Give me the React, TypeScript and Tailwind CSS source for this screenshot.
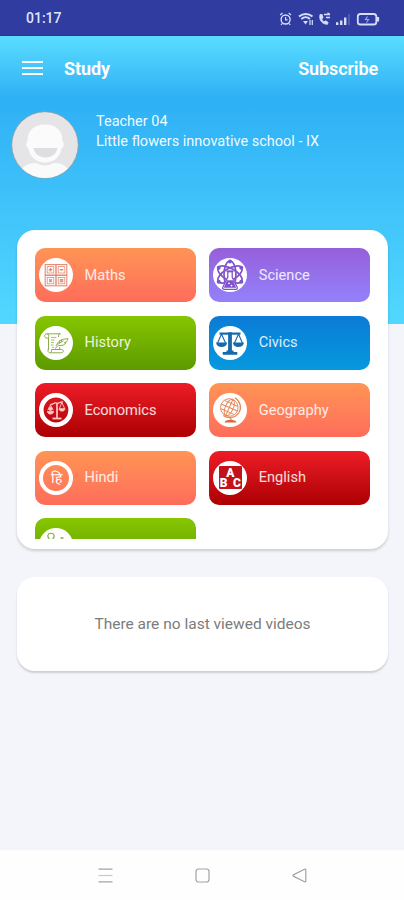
import type { ReactNode } from 'react';

const MathsIcon = () => (
    <svg viewBox="0 0 34 34" className="w-[34px] h-[34px]" fill="none" stroke="#e38a74" strokeWidth="1.1">
        <circle cx="17" cy="17" r="17" fill="#fff" stroke="none" />
        <rect x="6.2" y="6.6" width="21.6" height="21.2" />
        <path d="M17 6.6v21.200M6.200 17.200h21.600" strokeWidth="1.400" />
        <g strokeWidth="0.8">
            <rect x="8.2" y="8.6" width="6.6" height="6.4" />
            <rect x="19.2" y="8.6" width="6.6" height="6.4" />
            <rect x="8.2" y="19.4" width="6.6" height="6.4" />
            <rect x="19.2" y="19.4" width="6.6" height="6.4" />
        </g>
        <path d="M9.700 11.800h3.600M11.500 10v3.600M20.700 11.800h3.600M10.200 21.300l2.600 2.600M12.800 21.300l-2.600 2.600M20.700 21.700h3.600M20.700 23.500h3.600" strokeWidth="1.400" />
    </svg>
);

const ScienceIcon = () => (
    <svg viewBox="0 0 34 34" className="w-[34px] h-[34px]" fill="none" stroke="#8052cc" strokeWidth="1.7">
        <circle cx="17" cy="17" r="17" fill="#fff" stroke="none" />
        <ellipse cx="17" cy="16.500" rx="6" ry="13.500" />
        <ellipse cx="17" cy="16.500" rx="6" ry="13.500" transform="rotate(60 17 16.500)" />
        <ellipse cx="17" cy="16.500" rx="6" ry="13.500" transform="rotate(-60 17 16.500)" />
        <path d="M14.800 13.500h4.400V19l5 10.200a1.500 1.500 0 0 1-1.400 2.200H11.200a1.500 1.500 0 0 1-1.400-2.200l5-10.200z" fill="#fff" strokeWidth="1.300" />
        <path d="M14 22.200h6l3.200 7.600H10.800z" fill="#8052cc" stroke="none" />
        <path d="M13.500 13.300h7" strokeWidth="1.700" />
        <circle cx="16" cy="25.300" r="0.900" fill="#fff" stroke="none" />
        <circle cx="18.500" cy="27.600" r="0.900" fill="#fff" stroke="none" />
        <g fill="#8052cc" stroke="none">
            <circle cx="17" cy="3.600" r="2" />
            <circle cx="5.700" cy="9.800" r="2" />
            <circle cx="28.300" cy="9.800" r="2" />
            <circle cx="5.700" cy="23.700" r="2" />
            <circle cx="28.300" cy="23.700" r="2" />
        </g>
    </svg>
);

const HistoryIcon = () => (
    <svg viewBox="0 0 34 34" className="w-[34px] h-[34px]" fill="none" stroke="#8bad48" strokeWidth="1">
        <circle cx="17" cy="17" r="17" fill="#fff" stroke="none" />
        <path d="M8 7.800h13.500c-2 0-2 1.400-2 3.200M8 7.800c-3.200 0-3.200 4.300 0 4.300h1.500V24M8 7.800c2 0 1.800 2 1.600 4.300M9.600 22.500c-1.500 3 0 4.300 1.700 4.300h11.400c2.200 0 2.200-3.300 0-3.300H12.500c.3 2-.4 3.300-1.400 3.300M20.700 21v2.300" />
        <path d="M17 20c1.500-4.300 5.300-7.200 12-7.300-.4 2.200-1.700 3.500-3.700 4 .7.1 1.300 0 1.700-.1-1.200 2.500-4.200 3.400-7.500 2.800L16 22.500M18.500 18.500l6-3.800M20.500 17v-2.500M22.400 15.800v-2.300" />
        <path d="M12 11.400h5.400M12 14h3.600M12 16.600h3M12 19h2.500M13 21.300h2" strokeWidth="0.8" />
    </svg>
);

const CivicsIcon = () => (
    <svg viewBox="0 0 34 34" className="w-[34px] h-[34px]" fill="none" stroke="#1569ac" strokeWidth="1.3">
        <circle cx="17" cy="17" r="17" fill="#fff" stroke="none" />
        <path d="M6.500 7.600h21" strokeWidth="2.200" />
        <path d="M17 6.300v19" strokeWidth="3.800" />
        <path d="M13.500 24.500h7v1.500h3.800v2.700H9.700V26h3.800z" fill="#1569ac" stroke="none" />
        <path d="M8.500 8L4.600 17M8.500 8l4 9M25.500 8l-4 9M25.500 8l3.900 9" strokeWidth="1.100" />
        <path d="M3 16.500h11.200c-.4 3.200-2.700 4.500-5.600 4.500S3.400 19.700 3 16.500zM19.800 16.500H31c-.4 3.200-2.700 4.500-5.600 4.500s-5.200-1.300-5.600-4.500z" fill="#1569ac" stroke="none" />
    </svg>
);

const EconomicsIcon = () => (
    <svg viewBox="0 0 34 34" className="w-[34px] h-[34px]" fill="none" stroke="#ffc9c9" strokeWidth="0.9">
        <circle cx="17" cy="17" r="14.700" stroke="#fff" strokeWidth="4.600" />
        <path d="M18 10v15" strokeWidth="1.700" />
        <path d="M13.500 25.500h9" strokeWidth="1.800" />
        <path d="M11 12.200l5-2.300c1.300-.5 2 .8 3.200.3l4.800-1.500" strokeWidth="1.300" />
        <path d="M11.500 12.200l-2.700 5M11.500 12.200l2.700 5M22.900 9.500l-2.500 6M22.900 9.500l2.700 6" />
        <path d="M8.400 18.400h6.200c-.3 2-1.500 2.600-3.100 2.600s-2.800-.6-3.100-2.600zM20 15.700h6c-.3 1.800-1.400 2.300-3 2.300s-2.700-.5-3-2.300z" fill="#ffc9c9" />
        <circle cx="11.500" cy="15.700" r="1.700" fill="#ffc9c9" />
    </svg>
);

const GeographyIcon = () => (
    <svg viewBox="0 0 34 34" className="w-[34px] h-[34px]" fill="none" stroke="#e58a5c" strokeWidth="1">
        <circle cx="17" cy="17" r="17" fill="#fff" stroke="none" />
        <circle cx="16.300" cy="14.500" r="8.800" />
        <g transform="rotate(24 16.300 14.500)">
            <ellipse cx="16.300" cy="14.500" rx="4" ry="8.800" />
            <path d="M16.300 5.700v17.600M7.500 14.500h17.600M9.400 10h13.800M9.400 19h13.800" />
        </g>
        <path d="M22 4.700c5.500 3.600 7 10.300 3.700 15.300-3.500 5-10.200 6-15.500 2.500M17.800 24v3" strokeWidth="1.300" />
        <path d="M11.500 29.500c.5-1.700 2.600-2.700 6-2.700s5.500 1 6 2.700z" fill="#d66a43" stroke="none" />
    </svg>
);

const HindiIcon = () => (
    <span className="w-[34px] h-[34px] rounded-full border-[4.5px] border-white flex items-center justify-center text-white text-[14px] leading-none font-medium">
        हि
    </span>
);

const EnglishIcon = () => (
    <span className="w-[34px] h-[34px] rounded-full bg-white flex items-center justify-center">
        <span className="w-[23px] h-[23px] rounded-[1px] bg-[#c4121b] text-white text-[12px] leading-[10px] font-black flex flex-col items-center justify-center">
            <span>A</span>
            <span className="w-full flex justify-between px-px">
                <span>B</span>
                <span>C</span>
            </span>
        </span>
    </span>
);

const LastIcon = () => (
    <svg viewBox="0 0 34 34" className="w-[34px] h-[34px]" fill="none" stroke="#7fa536" strokeWidth="1.1">
        <circle cx="17" cy="17" r="17" fill="#fff" stroke="none" />
        <path d="M10 10.500c-2-2-1.400-5.200 2-5.200s4 3.200 2 5.200v2h-4z" />
        <path d="M21.500 10h3" strokeWidth="1.400" />
    </svg>
);

const orange = 'bg-linear-to-b from-[#ff9455] to-[#fe6c5b]';
const purple = 'bg-linear-to-b from-[#965fdc] to-[#9381fb]';
const green = 'bg-linear-to-b from-[#87c600] to-[#5c9a00]';
const blue = 'bg-linear-to-b from-[#0c7bd6] to-[#0699df]';
const red = 'bg-linear-to-b from-[#ee1c25] to-[#ac0003]';

const subjects: { name: string; color: string; icon: ReactNode }[] = [
    { name: 'Maths', color: orange, icon: <MathsIcon /> },
    { name: 'Science', color: purple, icon: <ScienceIcon /> },
    { name: 'History', color: green, icon: <HistoryIcon /> },
    { name: 'Civics', color: blue, icon: <CivicsIcon /> },
    { name: 'Economics', color: red, icon: <EconomicsIcon /> },
    { name: 'Geography', color: orange, icon: <GeographyIcon /> },
    { name: 'Hindi', color: orange, icon: <HindiIcon /> },
    { name: 'English', color: red, icon: <EnglishIcon /> },
    { name: '', color: green, icon: <LastIcon /> },
];

function StatusBar() {
    return (
        <div className="h-9 shrink-0 bg-[#303c9f] border-b border-[#28349a] flex items-center justify-between pl-[26px] pr-6 pt-[2px] text-[#dfe6ff]">
            <span className="text-[14px] font-medium">01:17</span>
            <svg viewBox="0 0 102 16" className="w-[102px] h-4" fill="none" stroke="#d5ddfb" strokeWidth="1.4">
                {/* Alarm */}
                <circle cx="7.600" cy="8.500" r="4.500" />
                <path d="M7.600 6v2.800h2M2.200 4l2.300-2M13 4l-2.300-2M4.300 12.300L3 14M10.900 12.300l1.300 1.700" strokeWidth="1.200" />
                {/* Wifi */}
                <path d="M21 5.500c4-3.500 9.500-3.500 13.500 0M23.300 8c2.600-2.300 6.200-2.300 8.700 0" strokeWidth="2" />
                <path d="M25 10h5l-2.500 3.500z" fill="#d5ddfb" stroke="none" />
                <path d="M32 14V9M34.300 9v5" strokeWidth="1.200" />
                {/* Call */}
                <path d="M42 3.500c-1.500 5.500 2.500 10 7.500 9.800l.6-2-2.600-1.500-1.400 1c-1.300-.7-2-1.700-2.300-3l1.300-1-.9-3.300z" fill="#d5ddfb" strokeWidth="0.800" />
                <path d="M46 3.500h6M49.500 1.800l2.500 1.700M48 6.500h4" strokeWidth="1.300" />
                {/* Signal */}
                <path d="M59.200 14v-2.800M63.200 14V9.500M67.200 14V6.500" strokeWidth="2.400" />
                <path d="M71 14V3" stroke="#5f6dc2" strokeWidth="1.300" />
                {/* Battery */}
                <rect x="79.800" y="3" width="18.500" height="10.500" rx="2.600" strokeWidth="1.800" />
                <path d="M100 6v4.500" strokeWidth="2.200" />
                <path d="M89.500 5.500l-2 3h3l-2 3" stroke="#9aa6e6" strokeWidth="1.200" />
            </svg>
        </div>
    );
}

function Header() {
    return (
        <header className="h-[62px] shrink-0 bg-linear-to-b from-[#5addff] to-[#2eb0f5] flex items-center pl-[22px] pr-[26px] pt-[3px] text-white">
            <div className="w-[21px] -mt-px flex flex-col gap-1">
                <span className="h-[2px] bg-white" />
                <span className="h-[2px] bg-white" />
                <span className="h-[2px] bg-white" />
            </div>
            <h1 className="ml-[21px] text-[18px] font-bold tracking-[-0.1px]">Study</h1>
            <span className="ml-auto text-[18px] font-semibold tracking-[-0.1px]">Subscribe</span>
        </header>
    );
}

function Avatar() {
    return (
        <svg viewBox="0 0 68 68" className="w-[68px] h-[68px] shrink-0">
            <clipPath id="avatar">
                <circle cx="34" cy="34" r="33" />
            </clipPath>
            <circle cx="34" cy="34" r="33.300" fill="#e5e5e7" stroke="#8e9aa0" strokeWidth="0.800" />
            <g clipPath="url(#avatar)">
                <path d="M8 68c0-10 7-16 16-16 3 0 5 2.500 10 2.500S41 52 44 52c9 0 16 6 16 16z" fill="#fafafa" />
                <path d="M16.500 30c0-11 7-16.500 17.500-16.500S51.500 19 51.500 30c2 1.500 1.500 6.500-.8 7.300C49 46.500 42.500 51.500 34 51.500S19 46.500 17.300 37.300c-2.300-.8-2.800-5.800-.8-7.300z" fill="#fbfbfb" />
                <path d="M22.500 37h24c-1.200 6-5.500 9.500-12 9.500S23.700 43 22.500 37z" fill="#dedee0" />
            </g>
        </svg>
    );
}

export default function App() {
    return (
        <div className="w-full h-[900px] bg-[#f4f5fa] flex flex-col overflow-hidden font-[Roboto,sans-serif]">
            <StatusBar />
            <Header />

            {/* Profile */}
            <section className="h-[226px] shrink-0 bg-linear-to-b from-[#2eb0f5] to-[#52d8ff] flex items-start pl-[11px] pt-[13px]">
                <Avatar />
                <div className="ml-[17px] pt-px text-[14.5px] leading-5 text-white/95">
                    <p>Teacher 04</p>
                    <p>Little flowers innovative school - IX</p>
                </div>
            </section>

            {/* Subjects */}
            <section className="ml-[17px] mr-4 -mt-[94px] h-[319px] shrink-0 bg-white rounded-[18px] shadow-[0_2px_3px_rgba(0,0,0,0.16)] pl-[18px] pr-[18px] pt-[18px]">
                <div className="h-[291px] overflow-hidden grid grid-cols-2 auto-rows-[54px] gap-x-[13.5px] gap-y-[13.5px]">
                    {subjects.map((subject) => (
                        <div key={subject.name} className={`flex items-center pl-1 rounded-[10px] ${subject.color}`}>
                            {subject.icon}
                            <span className="ml-[11.5px] pt-px text-[14.6px] text-white/85">{subject.name}</span>
                        </div>
                    ))}
                </div>
            </section>

            {/* Last viewed */}
            <section className="ml-[17px] mr-4 mt-7 h-[94px] shrink-0 bg-white rounded-[18px] shadow-[0_2px_2px_rgba(0,0,0,0.16)] flex items-center justify-center">
                <p className="pt-[2px] text-[15.5px] text-[#7c7c7c]">There are no last viewed videos</p>
            </section>

            {/* System navigation */}
            <nav className="mt-auto h-[50px] shrink-0 bg-[#fefefe] flex items-center justify-center gap-[82px] text-[#a3a3a3]">
                <svg viewBox="0 0 15 15" className="w-[15px] h-[15px]" stroke="currentColor" strokeWidth="1.200">
                    <path d="M.5 1.200h14M.5 13.800h14" />
                    <path d="M.5 7.500h14" stroke="#c8c8c8" />
                </svg>
                <svg viewBox="0 0 15 15" className="w-[15px] h-[15px]" fill="none" stroke="currentColor" strokeWidth="1.200">
                    <rect x="1" y="1" width="13" height="13" rx="2.500" />
                </svg>
                <svg viewBox="0 0 15 15" className="w-[15px] h-[15px]" fill="none" stroke="currentColor" strokeWidth="1.200" strokeLinejoin="round">
                    <path d="M1.300 6.900L12.500 1.200q1.300-.5 1.300.8v11q0 1.300-1.300.8L1.300 8.100q-.9-.6 0-1.200z" />
                </svg>
            </nav>
        </div>
    );
}
